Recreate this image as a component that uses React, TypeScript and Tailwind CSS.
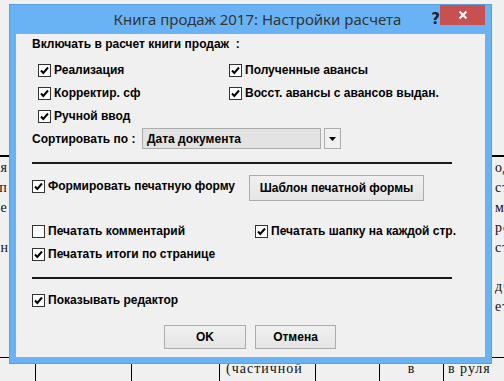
import React from "react";

const Check = ({ checked = true }: { checked?: boolean }) => (
  <span className="flex h-[13px] w-[13px] shrink-0 items-center justify-center border border-[#333333] bg-white">
    {checked && (
      <svg width="11" height="11" viewBox="0 0 11 11">
        <path d="M2 5.5 L4.3 8 L9 2.5" fill="none" stroke="#000" strokeWidth="2" />
      </svg>
    )}
  </span>
);

const CB = ({ label, checked = true }: { label: string; checked?: boolean }) => (
  <div className="flex items-center gap-[3px]">
    <Check checked={checked} />
    <span className="whitespace-nowrap">{label}</span>
  </div>
);

const Btn = ({ children, w }: { children: React.ReactNode; w: string }) => (
  <div
    className={`${w} flex h-full items-center justify-center border border-[#acacac] bg-gradient-to-b from-[#f0f0f0] to-[#e5e5e5]`}
  >
    {children}
  </div>
);

export default function App() {
  const doc = { fontFamily: '"Liberation Serif", "DejaVu Serif", serif' };
  return (
    <div
      className="relative h-[381px] w-[504px] overflow-hidden bg-[#f0f0f0] text-black"
      style={{ fontFamily: '"Liberation Sans", Arial, sans-serif' }}
    >
      {/* background document */}
      <div className="flex h-full flex-col text-[14px] leading-[20px] tracking-[1px] text-[#111]" style={doc}>
        <div className="h-[155px] shrink-0" />
        <div className="h-[2px] shrink-0 bg-black" />
        <div className="flex h-[200px] shrink-0 justify-between pt-[1px]">
          <div className="ml-[-8px] flex flex-col">
            <span>ия</span>
            <span>сп</span>
            <span>не</span>
            <span>е</span>
            <span>нн</span>
          </div>
          <div className="mr-[-14px] flex flex-col">
            <span>ода</span>
            <span>сту</span>
            <span>мо</span>
            <span>ро</span>
            <span>сту</span>
            <span className="mt-[19px]">дС</span>
            <span>ет</span>
          </div>
        </div>
        <div className="flex h-[24px] shrink-0 border-t border-black">
          <div className="w-[35px] shrink-0" />
          <div className="w-[96px] shrink-0 border-l border-black" />
          <div className="w-[88px] shrink-0 border-l border-black" />
          <div className="w-[96px] shrink-0 border-l border-black pl-[6px] pt-[1px] whitespace-nowrap">(частичной</div>
          <div className="w-[64px] shrink-0 border-l border-black" />
          <div className="w-[64px] shrink-0 border-l border-black pt-[1px] text-center">в</div>
          <div className="flex-1 border-l border-black pl-[4px] pt-[1px] whitespace-nowrap">в руля</div>
        </div>
      </div>

      {/* dialog window */}
      <div className="absolute left-[9px] top-[4px] flex h-[360px] w-[483px] flex-col border border-[#5a9fe0] bg-[#69b3f5]">
        <div className="relative flex h-[29px] shrink-0 items-center justify-center pl-[14px]">
          <span
            className="text-[15px] text-[#333]"
            style={{ fontFamily: '"Noto Sans", "Open Sans", sans-serif' }}
          >
            Книга продаж 2017: Настройки расчета
          </span>
          <div className="absolute right-[51px] top-[3px] text-[15px] font-bold text-[#222]" style={{ fontFamily: '"DejaVu Sans", sans-serif' }}>
            ?
          </div>
          <div className="absolute right-[6px] top-0 flex h-[20px] w-[45px] items-center justify-center bg-[#c75050]">
            <svg width="10" height="10" viewBox="0 0 10 10">
              <path d="M1.5 1.5 L8.5 8.5 M8.5 1.5 L1.5 8.5" stroke="#fff" strokeWidth="2" />
            </svg>
          </div>
        </div>
        <div className="mx-[6px] mb-[6px] flex flex-1 flex-col bg-[#f0f0f0] text-[12px] font-bold">
          <div className="mt-[2px] flex h-[16px] items-center pl-[16px]">
            <span className="whitespace-pre">Включать в расчет книги продаж  :</span>
          </div>
          <div className="mt-[8px] flex h-[20px] items-center pl-[22px]">
            <div className="w-[191px]">
              <CB label="Реализация" />
            </div>
            <CB label="Полученные авансы" />
          </div>
          <div className="mt-[3px] flex h-[20px] items-center pl-[22px]">
            <div className="w-[191px]">
              <CB label="Корректир. сф" />
            </div>
            <CB label="Восст. авансы с авансов выдан." />
          </div>
          <div className="mt-[3px] flex h-[20px] items-center pl-[22px]">
            <CB label="Ручной ввод" />
          </div>
          <div className="mt-[2px] flex h-[21px] items-center pl-[16px]">
            <span className="w-[110px]">Сортировать по :</span>
            <div className="flex h-full w-[179px] items-center border border-[#acacac] bg-[#e3e3e3] pl-[4px]">
              Дата документа
            </div>
            <div className="ml-[3px] flex h-full w-[17px] items-center justify-center border border-[#acacac] bg-[#f0f0f0]">
              <svg width="7" height="4" viewBox="0 0 7 4">
                <path d="M0 0 H7 L3.5 4 Z" fill="#000" />
              </svg>
            </div>
          </div>
          <div className="ml-[16px] mt-[13px] h-[2px] w-[420px] bg-[#1a1a1a]" />
          <div className="mt-[11px] flex h-[26px] items-center pl-[16px]">
            <div className="mb-[4px] w-[217px]">
              <CB label="Формировать печатную форму" />
            </div>
            <Btn w="w-[175px]">Шаблон печатной формы</Btn>
          </div>
          <div className="mt-[20px] flex h-[20px] items-center pl-[16px]">
            <div className="w-[223px]">
              <CB label="Печатать комментарий" checked={false} />
            </div>
            <CB label="Печатать шапку на каждой стр." />
          </div>
          <div className="mt-[3px] flex h-[20px] items-center pl-[16px]">
            <CB label="Печатать итоги по странице" />
          </div>
          <div className="ml-[16px] mt-[13px] h-[2px] w-[420px] bg-[#1a1a1a]" />
          <div className="mt-[11px] flex h-[20px] items-center pl-[16px]">
            <CB label="Показывать редактор" />
          </div>
          <div className="mt-[15px] flex h-[24px] items-center pl-[148px]">
            <Btn w="w-[82px]">OK</Btn>
            <div className="w-[9px]" />
            <Btn w="w-[81px]">Отмена</Btn>
          </div>
        </div>
      </div>
    </div>
  );
}
